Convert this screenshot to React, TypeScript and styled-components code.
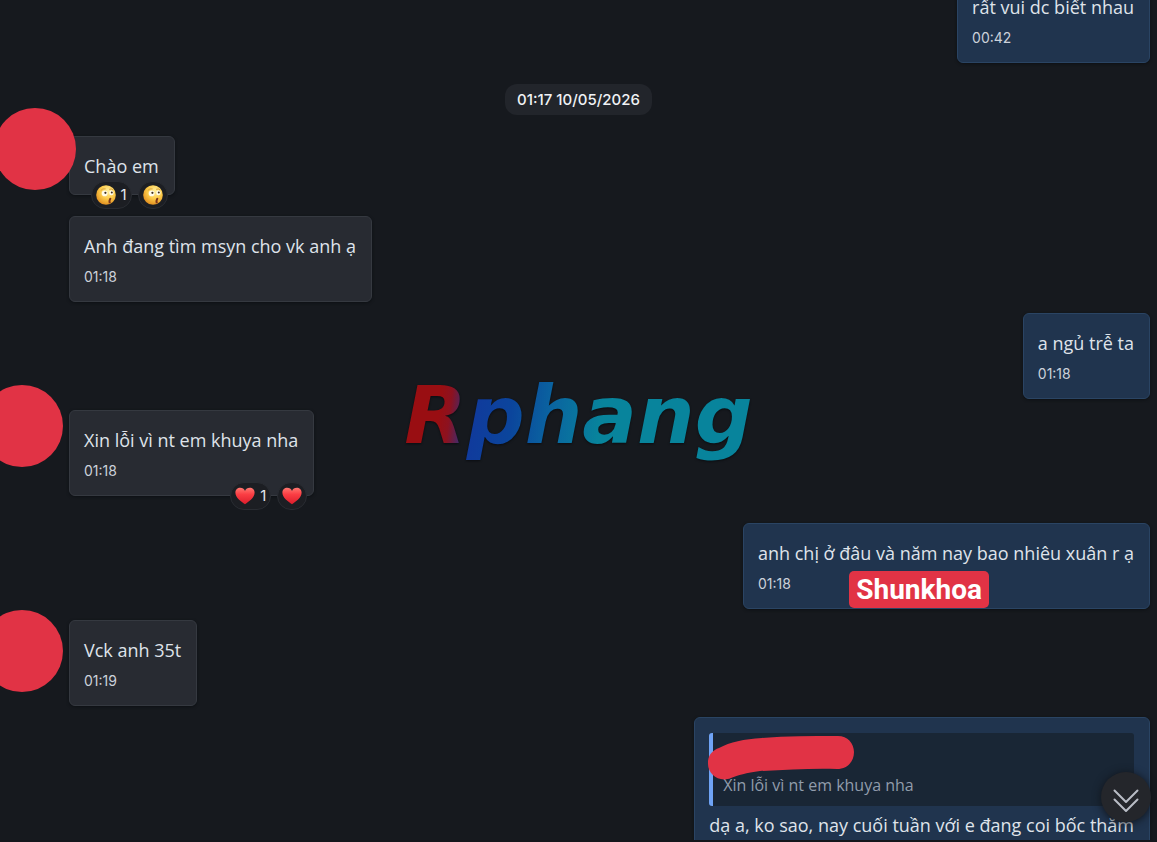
import React from "react";
import styled, { createGlobalStyle, css } from "styled-components";

const GlobalStyle = createGlobalStyle`
  *, *::before, *::after { box-sizing: border-box; }
  body {
    margin: 0;
    background: #16191e;
    color: #dfe3ea;
    font-family: "Open Sans", "Noto Sans", sans-serif;
  }
  p { margin: 0; }
`;

const Chat = styled.main`
  position: relative;
  height: 100vh;
  overflow: hidden;
  border-bottom: 2px solid #14171c;
`;

const MessageList = styled.section`
  display: flex;
  flex-direction: column;
  gap: 11px;
  margin-top: -23px;
  padding: 0 7px 0 69px;
`;

const DateRow = styled.div`
  display: flex;
  justify-content: center;
  margin: 10px 0 10px -69px;
  padding-left: 7px;
`;

const DatePill = styled.time`
  padding: 0 12px;
  border-radius: 12px;
  background: #22252b;
  color: #f0f2f5;
  font-family: Inter, sans-serif;
  font-size: 15px;
  font-weight: 500;
  line-height: 31px;
`;

const Row = styled.article<{ $mine?: boolean; $space?: number }>`
  position: relative;
  display: flex;
  justify-content: ${(p) => (p.$mine ? "flex-end" : "flex-start")};
  margin-bottom: ${(p) => p.$space ?? 0}px;
`;

const Bubble = styled.div<{ $mine?: boolean }>`
  position: relative;
  padding: 15px 15px 14px 14px;
  border: 1px solid #353940;
  border-radius: 6px;
  background: #282b32;
  box-shadow: 0 1px 3px #0d1014;
  ${(p) =>
    p.$mine &&
    css`
      border-color: #2a4463;
      background: #20344e;
    `}
`;

const Text = styled.p`
  font-size: 18px;
  font-weight: 500;
  line-height: 28px;
  white-space: nowrap;
`;

const Time = styled.time`
  display: block;
  margin-top: 7px;
  font-family: Inter, sans-serif;
  font-size: 14px;
  line-height: 20px;
  color: #ccd1da;
`;

const Mask = styled.span<{ $x: number; $y: number }>`
  position: absolute;
  z-index: 1;
  left: ${(p) => p.$x}px;
  top: ${(p) => p.$y}px;
  width: 82px;
  height: 82px;
  border-radius: 50%;
  background: #e13345;
`;

const Reactions = styled.div`
  position: absolute;
  right: 6px;
  bottom: -15px;
  display: flex;
  gap: 6px;
`;

const Reaction = styled.button`
  display: flex;
  align-items: center;
  justify-content: center;
  gap: 5px;
  min-width: 28px;
  height: 28px;
  padding: 0 4px;
  border: 1px solid #292c32;
  border-radius: 14px;
  background: #1c1e23;
  color: #e4e7ec;
  font-family: Inter, sans-serif;
  font-size: 15px;
  line-height: 20px;
`;

const Tag = styled.strong`
  position: absolute;
  right: 160px;
  bottom: 0;
  padding: 0 7px;
  border-radius: 5px;
  background: #e13345;
  color: #fff;
  font-family: Roboto, sans-serif;
  font-size: 28px;
  font-weight: 700;
  line-height: 37px;
`;

const Quote = styled.blockquote`
  position: relative;
  margin: 0 0 5px;
  padding: 40px 10px 9px;
  border-left: 4px solid #6fa3f5;
  border-radius: 3px;
  background: #192635;
  color: #919cab;
  font-size: 16px;
  line-height: 24px;
`;

const Scribble = styled.svg`
  position: absolute;
  left: -6px;
  top: 1px;
`;

const Watermark = styled.div`
  position: absolute;
  left: 50%;
  top: 50%;
  transform: translate(-50%, -50%);
  padding-bottom: 10px;
  font-family: "DejaVu Sans", sans-serif;
  font-size: 81px;
  font-style: italic;
  font-weight: 700;
  line-height: 96px;
  background: linear-gradient(97deg, #990e12 11%, #8c1220 14%, #103a9c 20%, #0b459c 31%, #0a64a0 42%, #08849c 56%);
  background-clip: text;
  color: transparent;
  filter: drop-shadow(0 1px 1px #0a0c10);
`;

const ScrollDown = styled.button`
  position: absolute;
  right: 6px;
  bottom: 18px;
  display: grid;
  place-items: center;
  width: 50px;
  height: 50px;
  padding: 5px 0 0;
  border: 0;
  border-radius: 50%;
  background: #24262b;
  box-shadow: 0 1px 8px #10141a;
`;

function ThinkingFace() {
  return (
    <svg width="20" height="20" viewBox="0 0 20 20" aria-hidden="true">
      <defs>
        <radialGradient id="face" cx="0.6" cy="0.3" r="0.75">
          <stop offset="0" stopColor="#fff0a0" />
          <stop offset="0.5" stopColor="#fccb4a" />
          <stop offset="1" stopColor="#e08a1c" />
        </radialGradient>
      </defs>
      <circle cx="10" cy="10" r="9.8" fill="url(#face)" />
      <ellipse cx="8.600" cy="8.4" rx="2.9" ry="2.8" fill="#fffbe9" />
      <ellipse cx="15.4" cy="7.8" rx="2.2" ry="2.5" fill="#fffbe9" />
      <circle cx="9.4" cy="7.8" r="1.1" fill="#42301b" />
      <circle cx="15.8" cy="7.4" r="1" fill="#42301b" />
      <path d="M5 5.2Q6.5 3.2 9.2 3.800M13.500 4.200Q15.500 3.400 16.800 4.600" fill="none" stroke="#c98a2a" strokeWidth="0.7" strokeLinecap="round" />
      <path d="M12.8 18.5Q12.2 15.2 13.2 13.6Q14.6 12 15.4 13.6Q14.2 15.4 14.8 18Z" fill="#7c351b" />
    </svg>
  );
}

function Heart() {
  return (
    <svg width="20" height="18" viewBox="0 0 20 18" aria-hidden="true">
      <defs>
        <linearGradient id="heart" x1="0" y1="0" x2="0" y2="1">
          <stop offset="0" stopColor="#ff7770" />
          <stop offset="0.4" stopColor="#fb3e44" />
          <stop offset="1" stopColor="#dc1d2c" />
        </linearGradient>
      </defs>
      <path d="M10 17.2C6.4 14.5.4 10.8.4 5.7.4 2.7 2.6.8 5.2.8 7.4.8 9.2 2 10 4 10.8 2 12.6.8 14.8.8c2.6 0 4.8 1.9 4.8 4.9 0 5.1-6 8.8-9.6 11.5Z" fill="url(#heart)" />
    </svg>
  );
}

function ReactionBar({ icon, name }: { icon: React.ReactNode; name: string }) {
  return (
    <Reactions>
      <Reaction aria-label={`${name}: 1`}>
        {icon}
        <span>1</span>
      </Reaction>
      <Reaction aria-label={`React: ${name}`}>{icon}</Reaction>
    </Reactions>
  );
}

export default function App() {
  return (
    <>
      <GlobalStyle />
      <Chat>
        <MessageList>
          <Row $mine>
            <Bubble $mine>
              <Text>rất vui dc biết nhau</Text>
              <Time>00:42</Time>
            </Bubble>
          </Row>
          <DateRow>
            <DatePill>01:17 10/05/2026</DatePill>
          </DateRow>
          <Row $space={10}>
            <Mask $x={-75} $y={-28} />
            <Bubble>
              <Text>Chào em</Text>
              <ReactionBar icon={<ThinkingFace />} name="Thinking" />
            </Bubble>
          </Row>
          <Row>
            <Bubble>
              <Text>Anh đang tìm msyn cho vk anh ạ</Text>
              <Time>01:18</Time>
            </Bubble>
          </Row>
          <Row $mine>
            <Bubble $mine>
              <Text>a ngủ trễ ta</Text>
              <Time>01:18</Time>
            </Bubble>
          </Row>
          <Row $space={16}>
            <Mask $x={-88} $y={-25} />
            <Bubble>
              <Text>Xin lỗi vì nt em khuya nha</Text>
              <Time>01:18</Time>
              <ReactionBar icon={<Heart />} name="Heart" />
            </Bubble>
          </Row>
          <Row $mine>
            <Bubble $mine>
              <Text>anh chị ở đâu và năm nay bao nhiêu xuân r ạ</Text>
              <Time>01:18</Time>
              <Tag>Shunkhoa</Tag>
            </Bubble>
          </Row>
          <Row>
            <Mask $x={-88} $y={-10} />
            <Bubble>
              <Text>Vck anh 35t</Text>
              <Time>01:19</Time>
            </Bubble>
          </Row>
          <Row $mine>
            <Bubble $mine>
              <Quote>
                <Scribble width="149" height="46" viewBox="0 0 149 46" aria-hidden="true">
                  <path
                    d="M1 27C2 20 6 16 12 14C23 8 37 5 55 4C80 2 105 2 129 2C140 1 147 9 147 18C147 28 140 35 130 35C105 34 80 36 53 37C39 39 31 41 24 44C12 49 1 40 1 30Z"
                    fill="#e13345"
                  />
                </Scribble>
                Xin lỗi vì nt em khuya nha
              </Quote>
              <Text>dạ a, ko sao, nay cuối tuần với e đang coi bốc thăm</Text>
            </Bubble>
          </Row>
        </MessageList>
        <Watermark>Rphang</Watermark>
        <ScrollDown aria-label="Scroll to latest message">
          <svg width="28" height="26" viewBox="0 0 28 26" fill="none" stroke="#b9bdc6" strokeWidth="2" strokeLinecap="round" strokeLinejoin="round" aria-hidden="true">
            <path d="M2.500 3.500L14 15L25.500 3.500M2.500 12.500L14 24L25.500 12.500" />
          </svg>
        </ScrollDown>
      </Chat>
    </>
  );
}
